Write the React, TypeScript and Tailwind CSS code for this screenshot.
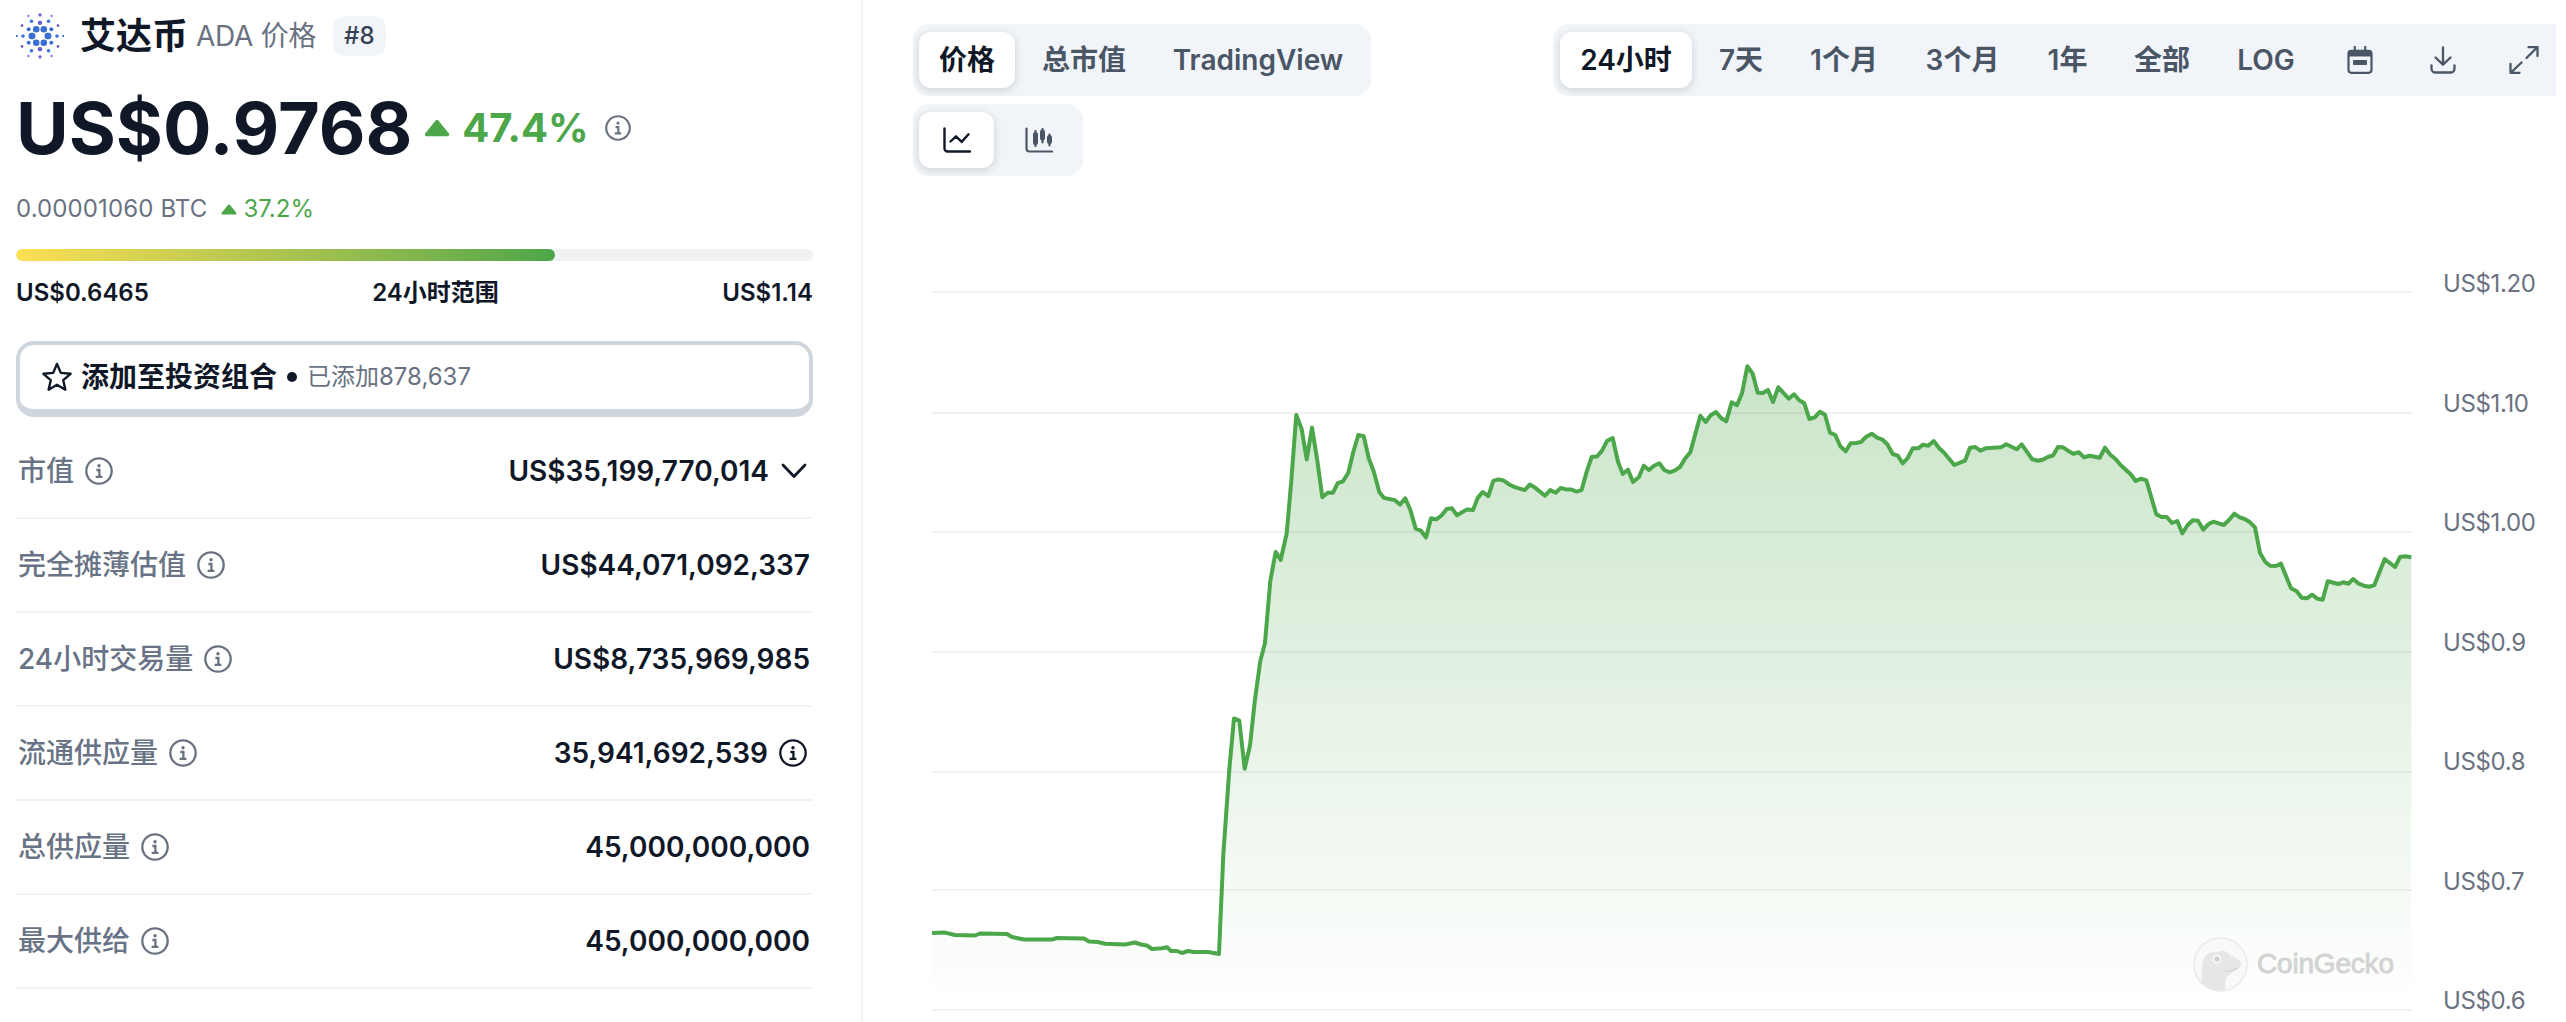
import { type ReactNode } from 'react';
import clsx from 'clsx';

const STATS: { label: string; value: string; extra?: 'chevron' | 'info' }[] = [
  { label: '市值', value: 'US$35,199,770,014', extra: 'chevron' },
  { label: '完全摊薄估值', value: 'US$44,071,092,337' },
  { label: '24小时交易量', value: 'US$8,735,969,985' },
  { label: '流通供应量', value: '35,941,692,539', extra: 'info' },
  { label: '总供应量', value: '45,000,000,000' },
  { label: '最大供给', value: '45,000,000,000' },
];

const AXIS = ['US$1.20', 'US$1.10', 'US$1.00', 'US$0.9', 'US$0.8', 'US$0.7', 'US$0.6'];
const GRID = [291, 412, 531, 651, 771, 889, 1009];

// 24h price line, x / y pairs in plot units
const LINE =
  '932,932 945,931.6 955,934 975,934.5 980,932.5 1007,933 1012,936 1024,938.5 1052,938.5 1057,937 1084,937.5 1089,940.5 1098,941 1105,942.7 1125,943.5 1135,941.5 1141,943.5 1147,944.5 1152,948 1162,947.3 1167,946.3 1171,950 1177,950 1182,952 1188,950 1194,951 1208,951 ' +
  '1219,953 1223.3,853.5 1229.3,768.5 1234,717.4 1239.3,719.6 1244.7,767.7 1250,744.4 1255,698.2 1260.3,660 1265,641.9 1270.3,579.8 1275.7,550.9 1280.7,559 1286.7,532.4 1291.3,479.9 1296.3,414 1301.7,428.1 1306.7,458.4 1312,426.6 1317.3,459.5 1322.3,496.2 1327.7,491.7 1333,491.7 1337.7,482.1 1343,480.3 1348.3,471.7 1353.3,451 1358.3,434 1363.7,435.1 1368.7,457 1374,471.4 1379.3,491 1384,496.9 1389.3,498 1394.7,499.1 1400,503.6 1405.3,497.3 1410.3,508.7 1415.7,527.6 1420.7,529.5 1426,536.5 1431,517.3 1436.3,518.4 1441.3,514.7 1446.7,508 1452,507.3 1457,514.3 1467,508.4 1473,509.1 1477.7,496.9 1482.7,491 1488.3,495.1 1493.3,479.9 1498.3,478.4 1503.7,479.5 1508.7,483.2 1514,485.8 1524.7,489.1 1529.7,483.6 1535,486.6 1545,494.7 1550.3,489.1 1555.7,491.7 1560.7,486.9 1566,488.4 1571,488.4 1576.7,490.6 1581.7,488.8 1586.7,470.6 1591.7,455.8 1597,455.5 1602,449.6 1607,440 1612.7,437 1618,460.7 1622.7,472.9 ' +
  '1628,468.7 1633,481 1639,476 1643.7,464.7 1649,469 1654,464.7 1659.3,462.3 1664.3,469 1669.7,471.3 1675,469.3 1680,466 1685.3,457.3 1690.3,451.3 1700.3,414.7 1705.7,421 1710.7,414.3 1716,411 1721,417 1726.3,420.3 1731.7,401.3 1737,404.3 1742,392.3 1747.3,365.3 1752.7,372.7 1757.7,391.7 1762.7,392 1768,389 1773,401 1778.3,386.3 1788.7,397.7 1794,393.3 1799.3,399.3 1804.3,402.3 1809.3,418 1814.7,416.3 1820,410.7 1825,413.7 1830,431.7 1835.3,434 1840.3,445.3 1845.7,450.3 1850.7,442.3 1856,442 1861,441 1866.3,435.7 1871.7,432.7 1877,436.7 1882,438.3 1887.3,443.3 1892.7,453 1897.7,454.7 1902.7,462.3 1907.7,457 1912.7,447.3 1918.3,447.3 1923,443.7 1928.3,444.7 1933.7,440 1939,447 1944.3,452 1954.3,464 1965,459.7 1970,446.7 1975.3,446 1980.3,449.7 1985.7,447.3 2001,446.3 2006.3,443.3 2016.7,448.3 2021.7,443.3 2032.3,458.3 2037.7,459.7 2042.7,458.7 2047.7,456 2053,454.5 2058,446 ' +
  '2063,446.3 2068,449.7 2073.3,452.7 2079,451.3 2084,456.3 2090,454.7 2099.7,456.7 2105,446.7 2110.3,453.7 2115.3,457.7 2121.3,464.7 2130.7,473.3 2135.7,480 2141,477.7 2146.3,479.3 2151.3,496.3 2156.3,513.3 2161.7,516 2166.7,516 2172,522 2177.3,520 2182.3,532.3 2187.7,524 2192.7,519.3 2198,519.7 2203.3,528.7 2208.3,523.3 2213.3,520.7 2223.7,524 2229,519 2234.3,512.7 2239.7,516.3 2244.7,518 2250,521.3 2255,526.3 2260,552 2265.3,561 2270,564.7 2275.7,565 2281,562.7 2291,587.3 2296.7,590.3 2301.7,596.7 2307,597.3 2312,593.7 2317.3,597.7 2322.7,598.7 2327.7,580.3 2338.3,583 2343.3,581.3 2348.3,582.7 2353.3,578 2358.7,582.7 2364,584.7 2369,585.7 2374.3,584.3 2384.7,558 2395,566 2400,556 2405.3,555.3 2411.3,556.3';

// [x, y, r] of one quadrant, mirrored on both axes
const ADA_DOTS = [
  [8, 0, 3.3], [3.8, 6.8, 3.3],
  [11.3, 6.7, 2], [0, 13.2, 2.1],
  [17, 0, 1.6], [8.5, 14.8, 1.7],
  [0, 21, 1.4], [18, 10.4, 1.4],
  [23.3, 0, 1], [11.6, 20, 1.1],
];

function AdaLogo() {
  return (
    <svg viewBox="-24 -24 48 48" className="h-12 w-12 shrink-0">
      {ADA_DOTS.map(([x, y, r], i) =>
        [[1, 1], [-1, 1], [1, -1], [-1, -1]].map(([sx, sy]) => (
          <circle key={`${i}${sx}${sy}`} cx={x * sx} cy={y * sy} r={r} fill={y > 9 && x < 19 && i !== 5 ? '#6a5fd0' : '#3a70d4'} />
        )),
      )}
    </svg>
  );
}

function InfoIcon({ className }: { className?: string }) {
  return (
    <svg viewBox="0 0 28 28" fill="none" className={clsx('shrink-0', className)}>
      <circle cx="14" cy="14" r="12.7" stroke="currentColor" strokeWidth="2.3" />
      <circle cx="14" cy="8.7" r="1.7" fill="currentColor" />
      <path d="M11.4 13h3v6.6M10.6 19.8h6.8" stroke="currentColor" strokeWidth="2.3" />
    </svg>
  );
}

function UpTriangle({ className }: { className?: string }) {
  return (
    <svg viewBox="0 0 26 18" className={clsx('shrink-0', className)}>
      <path d="M13 2.5 23.5 15.5H2.5Z" fill="currentColor" stroke="currentColor" strokeWidth="3.5" strokeLinejoin="round" />
    </svg>
  );
}

function LineIcon() {
  return (
    <svg width="28" height="26" viewBox="0 0 28 26" fill="none" stroke="currentColor" strokeWidth="2.4" strokeLinecap="round" strokeLinejoin="round">
      <path d="M1.5 1.5V21.5a3 3 0 0 0 3 3H27" />
      <path d="M7.5 14.5 13 9.3l5.7 5.6L25.5 7.3" />
    </svg>
  );
}

function CandleIcon() {
  return (
    <svg width="28" height="26" viewBox="0 0 28 26" fill="none" stroke="currentColor" strokeWidth="2.2" strokeLinecap="round">
      <path d="M1.5 1.5V21.5a3 3 0 0 0 3 3H27" />
      <path d="M10.5 4V19M17.5 2V15.5M24.5 7.5V18.5" />
      <path d="M10.5 7.5V15.5M17.5 5V11M24.5 10.5V14.5" strokeWidth="5" />
    </svg>
  );
}

function CalendarIcon() {
  return (
    <svg width="26" height="28" viewBox="0 0 26 28" fill="none">
      <path d="M7.8 1V5M18.2 1V5" stroke="currentColor" strokeWidth="2.2" strokeLinecap="round" />
      <rect x="1.5" y="4.8" width="23" height="22" rx="3" stroke="currentColor" strokeWidth="2.2" />
      <path d="M1.5 4.5h23v6h-23z" fill="currentColor" />
      <rect x="6" y="14" width="14" height="5" rx="1" fill="currentColor" />
    </svg>
  );
}

function DownloadIcon() {
  return (
    <svg width="26" height="28" viewBox="0 0 26 28" fill="none" stroke="currentColor" strokeWidth="2.3" strokeLinecap="round" strokeLinejoin="round">
      <path d="M13 1.5V18M5.5 11.5 13 18.7l7.5-7.2" />
      <path d="M1.5 19.5v3a4 4 0 0 0 4 4h15a4 4 0 0 0 4-4v-3" />
    </svg>
  );
}

function ExpandIcon() {
  return (
    <svg width="30" height="28" viewBox="0 0 30 28" fill="none" stroke="currentColor" strokeWidth="2.3" strokeLinecap="round" strokeLinejoin="round">
      <path d="M17.5 12 28 1.5M19.5 1.2H28.5V10" />
      <path d="M12.5 16.5 2 26.5M1.5 18V26.8H10.5" />
    </svg>
  );
}

function Tab({ active, className, children }: { active?: boolean; className?: string; children: ReactNode }) {
  return (
    <button
      className={clsx(
        'flex h-14 shrink-0 items-center justify-center whitespace-nowrap rounded-xl text-[28px] font-semibold',
        active ? 'bg-white text-gray-900 shadow-[0_2px_8px_rgba(15,23,42,0.16)]' : 'text-gray-600',
        className,
      )}
    >
      {children}
    </button>
  );
}

function Watermark() {
  return (
    <g>
      <circle cx="2220.5" cy="963.5" r="26.5" fill="#f8f9f8" stroke="#e9ebe9" strokeWidth="1.5" />
      <path
        d="M2201 981c2-8 0-14 2-21 2-6 6-9 13-9 5 0 7-2 11 0l4 4c5 2 10 4 10 7 0 5-6 8-11 11-5 4-6 8-4 15-9 4-19 0-25-7z"
        fill="#e6e6e6"
      />
      <circle cx="2217" cy="958" r="4.6" fill="#f6f6f6" />
      <circle cx="2217" cy="958" r="2.6" fill="#cfcfcf" />
      <path d="M2225 970c5 1 10-1 14-4" fill="none" stroke="#d4d4d4" strokeWidth="1.2" />
      <text x="2257" y="971.5" textLength="137" className="font-['Liberation_Sans',sans-serif] text-[28px]" fill="#d3d3d3" stroke="#d3d3d3" strokeWidth="0.9">
        CoinGecko
      </text>
    </g>
  );
}

function Sidebar() {
  return (
    <aside className="flex w-[863px] shrink-0 flex-col border-r-2 border-[#f1f3f5] pl-4 pr-12">
      <div className="mt-3 flex h-12 items-center">
        <AdaLogo />
        <span className="ml-4 text-4xl font-semibold leading-none text-gray-900">艾达币</span>
        <span className="ml-2 text-[28px] leading-none tracking-[-0.01em] text-gray-500">ADA 价格</span>
        <span className="ml-[17px] flex h-10 items-center rounded-xl bg-slate-100 px-[11px] text-2xl font-medium text-gray-700">#8</span>
      </div>

      <div className="mt-7 flex h-20 items-center">
        <span className="text-[72px] font-bold leading-none text-gray-900">US$0.9768</span>
        <UpTriangle className="ml-3 h-[18px] w-[26px] text-[#4ca64a]" />
        <span className="ml-3 text-[40px] font-bold leading-none text-[#4ca64a]">47.4%</span>
        <InfoIcon className="ml-4 h-[26px] w-[26px] text-gray-500" />
      </div>

      <div className="mt-[21px] flex h-10 items-center text-2xl">
        <span className="tracking-[0.005em] text-gray-500">0.00001060 BTC</span>
        <UpTriangle className="ml-3.5 h-[11px] w-4 text-[#4ca64a]" />
        <span className="ml-1.5 text-[#4ca64a]">37.2%</span>
      </div>

      <div className="mt-5 h-3 overflow-hidden rounded-full bg-[#f1f2f3]">
        <div className="h-full w-[539px] rounded-full bg-linear-to-r from-[#fcdf54] to-[#4ca64a]" />
      </div>
      <div className="mt-[14px] flex h-9 items-center justify-between text-2xl font-semibold text-gray-900">
        <span>US$0.6465</span>
        <span>24小时范围</span>
        <span>US$1.14</span>
      </div>

      <button className="mt-[30px] flex h-[76px] items-center rounded-[18px] border-4 border-b-8 border-[#cfd6de] pl-[21px]">
        <svg width="32" height="32" viewBox="0 0 24 24" fill="none" className="text-gray-900" stroke="currentColor" strokeWidth="1.8" strokeLinejoin="round">
          <path d="M12 2.2 14.9 8.9 22.2 9.6 16.7 14.4 18.3 21.5 12 17.8 5.7 21.5 7.3 14.4 1.8 9.6 9.1 8.9Z" />
        </svg>
        <span className="ml-2 text-[28px] font-semibold text-gray-900">添加至投资组合</span>
        <span className="mx-2.5 h-2.5 w-2.5 rounded-full bg-gray-900" />
        <span className="text-2xl text-gray-500">已添加878,637</span>
      </button>

      <div className="mt-2">
        {STATS.map(s => (
          <div key={s.label} className="flex h-[94px] items-center justify-between border-b-2 border-[#f1f2f4] pl-0.5 pr-[3px] text-[28px]">
            <span className="flex items-center gap-[11px] font-medium text-[#687386]">
              {s.label}
              <InfoIcon className="h-7 w-7 text-gray-500" />
            </span>
            <span className="flex items-center font-semibold text-gray-900">
              {s.value}
              {s.extra === 'chevron' && (
                <svg width="26" height="16" viewBox="0 0 26 16" fill="none" className="ml-3 mr-[3px]">
                  <path d="M2 2 13 13.5 24 2" stroke="currentColor" strokeWidth="2.8" strokeLinecap="round" strokeLinejoin="round" />
                </svg>
              )}
              {s.extra === 'info' && <InfoIcon className="ml-[11px] mr-[3px] h-7 w-7" />}
            </span>
          </div>
        ))}
      </div>
    </aside>
  );
}

export default function App() {
  return (
    <div className="flex h-[1022px] w-[2566px] overflow-hidden bg-white font-['Inter','Noto_Sans_CJK_SC',sans-serif]">
      <Sidebar />

      <main className="flex min-w-0 flex-1 flex-col">
        <div className="flex justify-between pl-[50px] pr-2.5 pt-6">
          <div className="flex flex-col items-start gap-2">
            <div className="flex h-[72px] items-center rounded-2xl bg-slate-100 pl-1.5 pr-2">
              <Tab active className="w-24">价格</Tab>
              <Tab className="w-[138px]">总市值</Tab>
              <Tab className="w-[210px]">TradingView</Tab>
            </div>
            <div className="flex h-[72px] items-center rounded-2xl bg-slate-100 px-1.5">
              <Tab active className="w-[75px]"><LineIcon /></Tab>
              <Tab className="ml-1.5 w-[77px]"><CandleIcon /></Tab>
            </div>
          </div>

          <div className="flex h-[72px] w-[1003px] items-center rounded-l-2xl bg-slate-100 pl-[7px]">
            <Tab active className="w-[132px]">24小时</Tab>
            <Tab className="w-[98px]">7天</Tab>
            <Tab className="w-[108px]">1个月</Tab>
            <Tab className="w-[129px]">3个月</Tab>
            <Tab className="w-[81px]">1年</Tab>
            <Tab className="w-[108px]">全部</Tab>
            <Tab className="w-[100px]">LOG</Tab>
            <Tab className="w-[88px]"><CalendarIcon /></Tab>
            <Tab className="w-[77px]"><DownloadIcon /></Tab>
            <Tab className="ml-7 w-[30px]"><ExpandIcon /></Tab>
          </div>
        </div>

        <div className="mt-[85px] flex">
          <svg width="1484" height="762" viewBox="930 260 1484 762" className="ml-[67px] shrink-0">
            <defs>
              <linearGradient id="area" x1="0" y1="365" x2="0" y2="1009" gradientUnits="userSpaceOnUse">
                <stop offset="0" stopColor="#4ca64a" stopOpacity="0.3" />
                <stop offset="1" stopColor="#4ca64a" stopOpacity="0" />
              </linearGradient>
            </defs>
            <polygon points={`932,1009 ${LINE} 2411.3,1009`} fill="url(#area)" />
            {GRID.map(y => (
              <line key={y} x1="932" x2="2412" y1={y} y2={y} stroke="#0f172a" strokeOpacity="0.055" strokeWidth="2" />
            ))}
            <polyline points={LINE} fill="none" stroke="#4ca64a" strokeWidth="4" strokeLinejoin="round" />
            <Watermark />
          </svg>
          <div className="ml-[29px] mt-[8px] flex h-[747px] flex-col justify-between text-2xl leading-[30px] tracking-[-0.015em] text-gray-500">
            {AXIS.map(a => (
              <span key={a}>{a}</span>
            ))}
          </div>
        </div>
      </main>
    </div>
  );
}
